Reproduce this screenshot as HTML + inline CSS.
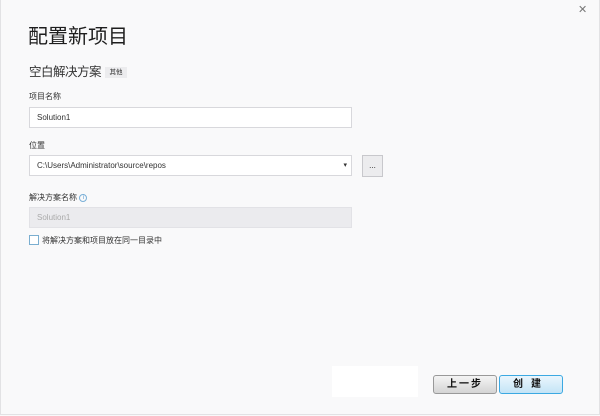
<!DOCTYPE html>
<html><head><meta charset="utf-8"><style>
*{margin:0;padding:0;box-sizing:border-box}
body{width:600px;height:416px;background:#f9f9fa;font-family:"Liberation Sans","Noto Sans CJK SC",sans-serif;position:relative;overflow:hidden;color:#1e1e1e}
.a{position:absolute}
.frame{left:0;top:0;width:600px;height:415px;border:1px solid #e2e2e4;border-top:none}
.t1{left:28px;top:24px;font-size:20px;line-height:26px;color:#1e1e1e;letter-spacing:0}
.t2{left:29px;top:64px;font-size:12.5px;line-height:17px;color:#333;letter-spacing:-0.5px}
.tag{left:105px;top:67px;width:22px;height:11px;background:#ececee;font-size:6.5px;line-height:11px;text-align:center;color:#333}
.lbl{font-size:8px;color:#333}
.inp{left:29px;width:323px;height:21px;border:1px solid #d8d8dc;background:#fff;font-size:8px;line-height:19px;padding-left:7px;color:#333}
.dis{background:#ebebee;color:#aaa;border-color:#e2e2e6}
.btn{width:64px;height:19px;border-radius:3px;font-size:10px;font-weight:bold;text-align:center;line-height:17px;letter-spacing:2px}
</style></head><body>
<div class="a frame"></div>
<div class="a" style="left:578px;top:3px;font-size:11px;color:#777">✕</div>
<div class="a t1">配置新项目</div>
<div class="a t2">空白解决方案</div>
<div class="a tag">其他</div>
<div class="a lbl" style="left:29px;top:91px">项目名称</div>
<div class="a inp" style="top:107px">Solution1</div>
<div class="a lbl" style="left:29px;top:140px">位置</div>
<div class="a inp" style="top:155px">C:\Users\Administrator\source\repos<span style="position:absolute;right:4px;top:0;font-size:7px">▾</span></div>
<div class="a" style="left:362px;top:155px;width:21px;height:22px;border:1px solid #c8c8cc;background:#ececee;font-size:8px;text-align:center;line-height:20px">...</div>
<div class="a lbl" style="left:29px;top:192px">解决方案名称 <span style="display:inline-block;width:8px;height:8px;border:1px solid #7ab0d8;border-radius:50%;font-size:6px;line-height:6px;text-align:center;color:#5a9ad0;vertical-align:middle">i</span></div>
<div class="a inp dis" style="top:207px">Solution1</div>
<div class="a" style="left:29px;top:235px;width:10px;height:10px;border:1px solid #7aaed0;background:#fff"></div>
<div class="a lbl" style="left:42px;top:235px">将解决方案和项目放在同一目录中</div>
<div class="a" style="left:332px;top:366px;width:86px;height:31px;background:#fff"></div>
<div class="a btn" style="left:433px;top:375px;border:1px solid #999;background:linear-gradient(#f4f4f4,#d4d4d4);color:#111">上一步</div>
<div class="a btn" style="left:499px;top:375px;border:1px solid #3ca9e2;background:linear-gradient(#eaf6fd,#c4e4f6);color:#111;letter-spacing:8px">创建</div>
</body></html>
